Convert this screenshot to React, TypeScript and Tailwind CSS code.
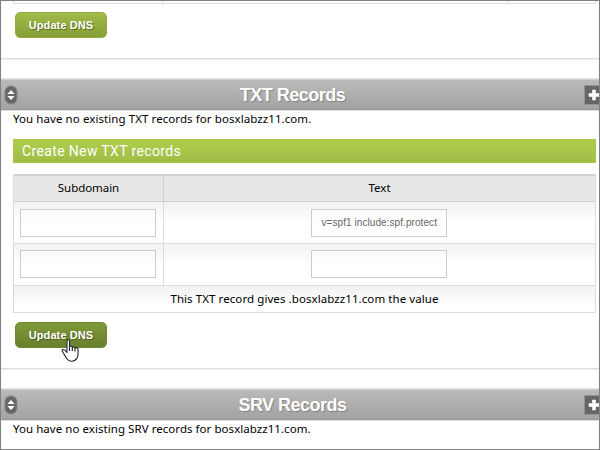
import React from "react";

const lucida = "font-['Noto_Sans','Open_Sans',sans-serif] text-[11.5px] leading-[16px] text-black whitespace-nowrap";

function UpdateButton({ pressed = false }: { pressed?: boolean }) {
  return (
    <button
      className={
        "block h-[26px] w-[92px] rounded-[5px] border font-['Liberation_Sans',Arial,sans-serif] text-[11px] font-bold leading-[24px] text-white [text-shadow:1px_1px_1px_rgba(50,60,20,0.6)] whitespace-nowrap " +
        (pressed
          ? "border-[#718732] bg-linear-to-b from-[#7f9938] to-[#69802c]"
          : "border-[#92aa40] bg-linear-to-b from-[#a0bb48] to-[#869f38]")
      }
    >
      <span className="tracking-[0.1px]">Update DNS</span>
    </button>
  );
}

function SectionBar({ title, tracking }: { title: string; tracking: string }) {
  return (
    <div className="flex h-[33px] items-center justify-between border-t border-b border-t-[#e4e4e4] border-b-[#e0e0e0]">
      <div className="flex h-[31px] w-full items-center justify-between border-t border-b border-t-[#cecece] border-b-[#969696] bg-linear-to-b from-[#bababa] to-[#a3a3a3]">
        <svg className="ml-[3px] h-[20px] w-[14px] shrink-0" viewBox="0 0 14 20">
          <rect x="0.8" y="0.8" width="12.4" height="18.4" rx="6" fill="#666" stroke="#999" strokeWidth="1" />
          <path d="M7 4.9 L10.7 9.1 H3.3 Z M7 15.1 L10.7 10.9 H3.3 Z" fill="#fff" />
        </svg>
        <h2
          className={
            "pr-[17px] font-['Liberation_Sans',Arial,sans-serif] text-[18px] font-bold leading-[28px] text-white [text-shadow:1px_1px_1px_rgba(90,90,90,0.5)] whitespace-nowrap " +
            tracking
          }
        >
          {title}
        </h2>
        <svg className="h-[20px] w-[15px] shrink-0" viewBox="0 0 15 20">
          <rect x="0.5" y="0.5" width="19" height="19" fill="#666" stroke="#949494" />
          <path d="M8.5 5 H11.5 V8.5 H15 V11.5 H11.5 V15 H8.5 V11.5 H5 V8.5 H8.5 Z" fill="#fff" stroke="#fff" strokeWidth="0.6" strokeLinejoin="round" />
        </svg>
      </div>
    </div>
  );
}

function Field({ value = "" }: { value?: string }) {
  return (
    <div className="flex h-[28px] w-[136px] items-center overflow-hidden border border-[#cbcbcb] bg-linear-to-b from-[#fafafa] to-white to-60% pl-[10px] font-['Liberation_Sans',Arial,sans-serif] text-[10px] text-[#666]">
      <span className="whitespace-nowrap tracking-[0.07px]">{value}</span>
    </div>
  );
}

function RecordRow({ text, raised = false }: { text?: string; raised?: boolean }) {
  const pad = raised ? " pb-[2px]" : "";
  return (
    <div className="flex h-[42px] border-b border-[#dcdcdc] bg-linear-to-b from-[#f2f2f2] to-white to-50%">
      <div className={"flex w-[150px] items-center justify-center border-r border-[#dcdcdc] pr-[2px]" + pad}>
        <Field />
      </div>
      <div className={"flex flex-1 items-center justify-center pr-[2px]" + pad}>
        <Field value={text} />
      </div>
    </div>
  );
}

export default function App() {
  return (
    <div className="relative h-[450px] w-[600px] overflow-hidden border border-[#808080] bg-white">
      <div className="ml-[12px] flex h-[3px] w-[583px] border-x border-b border-[#dcdcdc]">
        <div className="w-[149px] border-r border-[#dcdcdc]" />
        <div className="w-[345px] border-r border-[#dcdcdc]" />
      </div>
      <div className="h-[54px] pl-[14px] pt-[8px]">
        <UpdateButton />
      </div>
      <div className="h-[2px] border-y border-t-[#dedede] border-b-[#ededed]" />
      <div className="h-[18px]" />

      <SectionBar title="TXT Records" tracking="tracking-[-0.5px]" />
      <p className={lucida + " h-[28px] pl-[12px]"}>
        <span className="tracking-[0.08px]">You have no existing TXT records for bosxlabzz11.com.</span>
      </p>
      <div className="ml-[12px] h-[24px] w-[583px] border border-[#a9c644] bg-linear-to-b from-[#afce4c] to-[#a0bc47] pl-[8px] font-['Roboto',sans-serif] text-[14px] leading-[22px] text-white whitespace-nowrap">
        <span className="tracking-[0.36px]">Create New TXT records</span>
      </div>

      <div className="ml-[12px] mt-[11px] w-[583px] border-x border-b border-[#dcdcdc]">
        <div className={lucida + " flex h-[28px] border-t-2 border-b border-t-[#d2d2d2] border-b-[#cecece] bg-[#e7e7e7]"}>
          <div className="flex w-[150px] items-center justify-center border-r border-[#d0d0d0] pb-[2px]">
            <span className="tracking-[-0.05px]">Subdomain</span>
          </div>
          <div className="flex flex-1 items-center justify-center pb-[2px]">
            <span>Text</span>
          </div>
        </div>
        <RecordRow text="v=spf1 include:spf.protect" />
        <RecordRow raised />
        <div className={lucida + " flex h-[26px] items-center justify-center bg-linear-to-b from-[#f2f2f2] to-white to-80%"}>
          <span className="tracking-[0.08px]">This TXT record gives .bosxlabzz11.com the value</span>
        </div>
      </div>

      <div className="h-[55px] pl-[14px] pt-[9px]">
        <UpdateButton pressed />
      </div>
      <div className="h-[2px] border-y border-t-[#dedede] border-b-[#ededed]" />
      <div className="h-[18px]" />
      <SectionBar title="SRV Records" tracking="tracking-[-0.5px]" />
      <p className={lucida + " pl-[12px]"}>
        <span className="tracking-[0.05px]">You have no existing SRV records for bosxlabzz11.com.</span>
      </p>

      <svg className="absolute left-[60px] top-[338px] h-[24px] w-[19px]" viewBox="0 0 19 24">
        <path
          d="M6 2 Q6 .7 7.2 .7 T8.5 2 V8 Q8.8 6.8 10 7 T11.3 8.5 Q12.5 7.2 14 9 Q15.8 8 17 9.8 V16 Q17 18 15.5 20 Q13 22.5 10.5 22.2 Q7.5 22.3 6.2 20 Q4.5 18 3 15 L1.3 12.2 Q.8 10.8 2 10.5 Q4 10.5 6 13.5 Z"
          fill="white"
          stroke="#202030"
          strokeWidth="1.1"
          strokeLinejoin="round"
        />
        <path d="M8.5 7.5 V12 M11.3 8.5 V12 M14 9 V12.5" stroke="#202030" strokeWidth="1.1" fill="none" />
      </svg>
    </div>
  );
}
